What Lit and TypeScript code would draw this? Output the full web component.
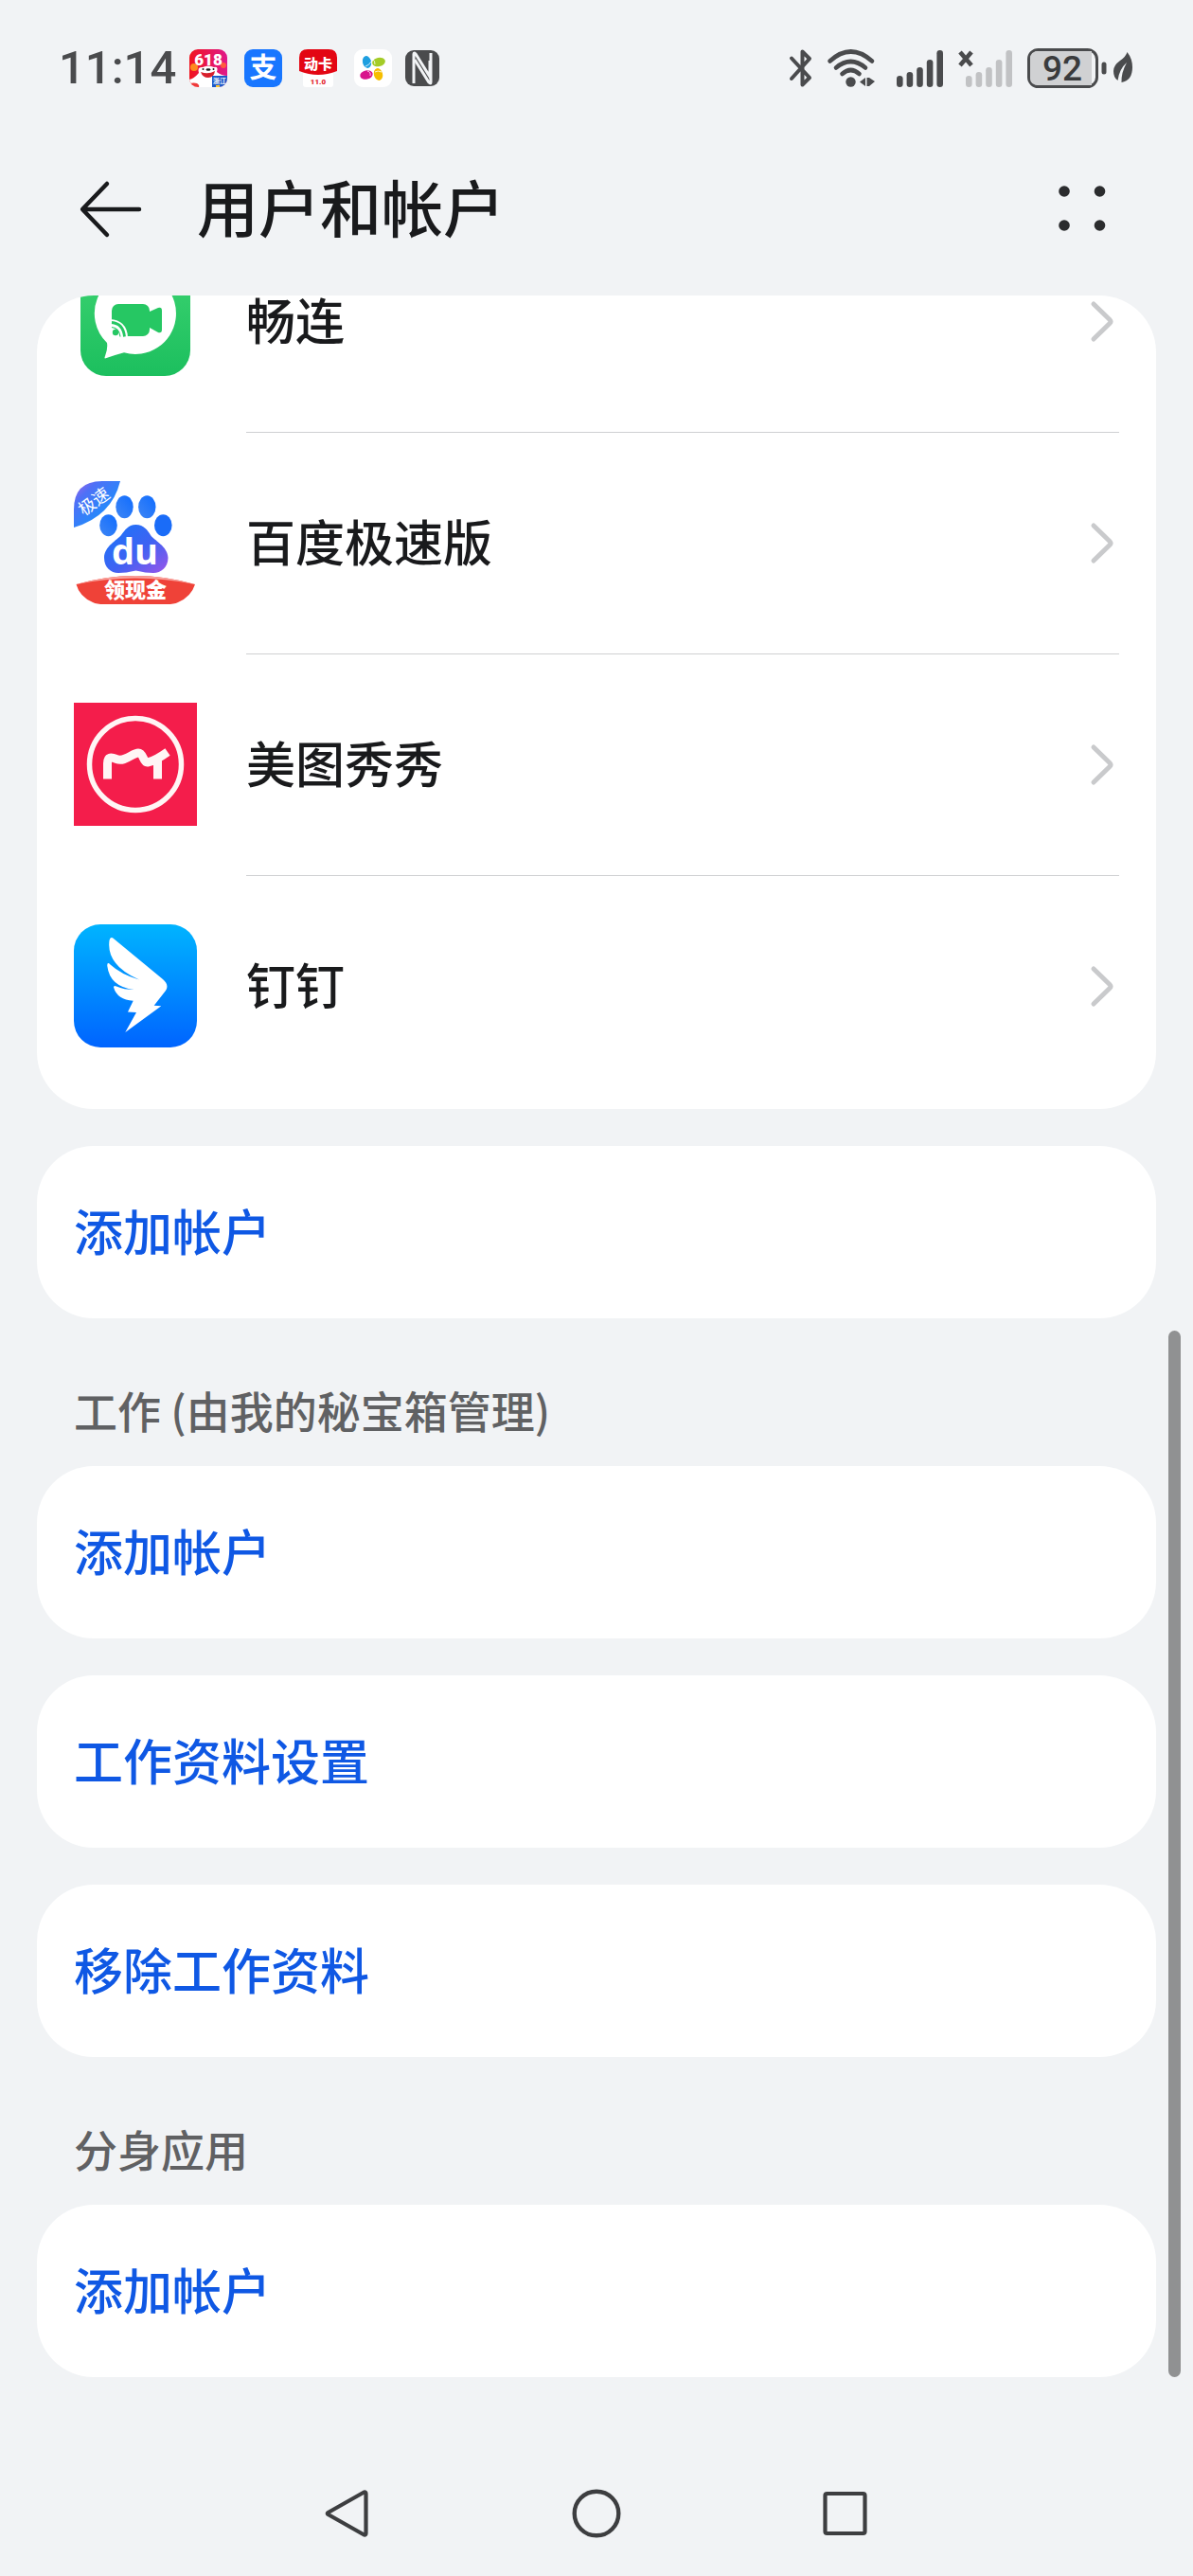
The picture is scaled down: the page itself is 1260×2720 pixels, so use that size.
import { LitElement, html, css, svg, nothing } from "lit";
import { customElement, property } from "lit/decorators.js";

const cjk = css`"Noto Sans CJK SC", "Noto Sans", sans-serif`;

const changlianIcon = html`<svg class="art inset" viewBox="0 0 116 116" aria-hidden="true">
  <defs>
    <linearGradient id="cl" x1="0" y1="0" x2="0" y2="1">
      <stop offset="0" stop-color="#3bd270" />
      <stop offset="1" stop-color="#1cbf5e" />
    </linearGradient>
  </defs>
  <rect width="116" height="116" rx="27" fill="url(#cl)" />
  <path d="M58 7a43 43 0 1 1-12 84.300Q36 94 26 97.500Q25 97 26 95Q29 87 28 81A43 43 0 0 1 58 7z" fill="#fff" />
  <rect x="33" y="40" width="40" height="34" rx="7" fill="#26c763" />
  <path d="M73 48l9-4q4-1 4 3v20q0 4-4 3l-9-5z" fill="#26c763" />
  <path d="M31 56q18 1 19 19H31z" fill="#fff" />
  <path d="M33 59.500q12 1 13.500 15" fill="none" stroke="#26c763" stroke-width="2.800" />
  <circle cx="37" cy="70" r="3.200" fill="#26c763" />
  <path d="M33 64.500q8 1 9 10" fill="none" stroke="#26c763" stroke-width="1.200" />
</svg>`;

const baiduIcon = html`<svg class="art" viewBox="0 0 130 130" aria-hidden="true">
  <defs>
    <linearGradient id="bb" x1="0" y1="0" x2="1" y2="1">
      <stop offset="0" stop-color="#a765ea" />
      <stop offset="0.25" stop-color="#4f70f6" />
      <stop offset="0.6" stop-color="#2a86fa" />
      <stop offset="1" stop-color="#2a7cfa" />
    </linearGradient>
    <linearGradient id="bp" x1="0" y1="0" x2="1" y2="1">
      <stop offset="0" stop-color="#1677fa" />
      <stop offset="0.55" stop-color="#3f62f2" />
      <stop offset="1" stop-color="#9a55ea" />
    </linearGradient>
    <linearGradient id="bt" x1="0" y1="1" x2="1" y2="0">
      <stop offset="0" stop-color="#3f86f4" />
      <stop offset="1" stop-color="#0f6cff" />
    </linearGradient>
  </defs>
  <path d="M49 0H30Q0 0 0 30V49Q40 37 49 0z" fill="url(#bb)" />
  <text class="cjk" x="21" y="28" font-size="18" fill="#fff" text-anchor="middle" transform="rotate(-36 21 21)">极速</text>
  <ellipse cx="53.500" cy="27.300" rx="9.200" ry="12" fill="url(#bt)" />
  <ellipse cx="77.300" cy="27.300" rx="9.200" ry="12" fill="url(#bt)" />
  <ellipse cx="36.500" cy="46.700" rx="9.300" ry="11.500" fill="url(#bt)" />
  <ellipse cx="94.300" cy="46.700" rx="9.300" ry="11.500" fill="#1a6cf8" />
  <path d="M65.500 46C74 46 78 52 81 57S99.500 69 99.500 81C99.500 91 92 97 84 97Q76 97 65.500 94.500Q55 97 47 97C39 97 32 91 32 81C32 69 46 62 50 57S57 46 65.500 46z" fill="url(#bp)" />
  <text class="latin" x="64.500" y="88" font-size="38" font-weight="700" fill="#fff" text-anchor="middle">du</text>
  <path d="M2.500 109Q65 91 128 109Q124 122 110 128Q106 130 98 130H32Q24 130 20 128Q6 122 2.500 109z" fill="#ef4238" />
  <path d="M2.500 109Q65 91 128 109Q65 96 2.500 109z" fill="#f9a09a" />
  <text class="cjk" x="65" y="123" font-size="22" font-weight="900" fill="#fff" text-anchor="middle">领现金</text>
</svg>`;

const meituIcon = html`<svg class="art" viewBox="0 0 130 130" aria-hidden="true">
  <rect width="130" height="130" fill="#f41d4b" />
  <circle cx="65" cy="65" r="48.500" fill="none" stroke="#fff5f5" stroke-width="5.500" />
  <path d="M35.500 80.500V64C35.500 57 39 57 45 59.500C54 63 62 53 68 53C74 53 73 64 78 63C83 62 92 57 99 52" fill="none" stroke="#fff5f5" stroke-width="9" />
  <path d="M88.500 58V80.500" fill="none" stroke="#fff5f5" stroke-width="9" />
</svg>`;

const dingIcon = html`<svg class="art" viewBox="0 0 130 130" aria-hidden="true">
  <defs>
    <linearGradient id="dd" x1="0" y1="0" x2="0" y2="1">
      <stop offset="0" stop-color="#00b4ff" />
      <stop offset="1" stop-color="#0064ff" />
    </linearGradient>
  </defs>
  <rect width="130" height="130" rx="28" fill="url(#dd)" />
  <path d="M37.500 17Q38.500 12 42.500 15.500L94 58Q101 64 97 70L84.700 85.700L92.300 86.300L54.300 114L66 93L57 92.600L62.700 80.700Q46 80 42 66.500Q42 64 45 65.500Q53 69 63.700 69Q38 66 35.300 44Q35 39 38.500 42.500Q50 53 69 58.500Q34 43 37.500 17z" fill="#fff" />
</svg>`;

interface Account {
  name: string;
  icon: unknown;
}

const accounts: Account[] = [
  { name: "畅连", icon: changlianIcon },
  { name: "百度极速版", icon: baiduIcon },
  { name: "美图秀秀", icon: meituIcon },
  { name: "钉钉", icon: dingIcon },
];

const sections: { heading?: string; actions: string[] }[] = [
  { actions: ["添加帐户"] },
  { heading: "工作 (由我的秘宝箱管理)", actions: ["添加帐户", "工作资料设置", "移除工作资料"] },
  { heading: "分身应用", actions: ["添加帐户"] },
];

const bars = (x: number, color: string) =>
  [12, 16, 21, 29, 39].map(
    (h, i) => svg`<rect x=${x + i * 10.6} y=${40 - h} width="6.600" height=${h} rx="3.300" fill=${color} />`
  );

@customElement("status-bar")
class StatusBar extends LitElement {
  static styles = css`
    :host {
      display: flex;
      justify-content: space-between;
      align-items: center;
      box-sizing: border-box;
      height: 130px;
      padding: 14px 64px 0 62px;
      color: #4a4b4d;
      font-family: Roboto, sans-serif;
    }
    svg {
      display: block;
      height: 40px;
      overflow: visible;
    }
    .left {
      display: flex;
      align-items: center;
      gap: 14px;
    }
    .apps,
    .right {
      display: flex;
      align-items: center;
    }
    .apps {
      gap: 18px;
    }
    .right {
      gap: 16px;
    }
    .time {
      font-size: 49px;
      font-weight: 500;
      line-height: 60px;
    }
    .cjk {
      font-family: ${cjk};
    }
  `;

  render() {
    return html`
      <div class="left">
        <span class="time">11:14</span>
        <div class="apps">
          <svg width="40" viewBox="0 0 40 40" aria-hidden="true">
            <defs>
              <linearGradient id="jd" x1="0" y1="0" x2="1" y2="0">
                <stop offset="0" stop-color="#f0141e" />
                <stop offset="1" stop-color="#e0188a" />
              </linearGradient>
              <clipPath id="jc"><rect width="40" height="40" rx="9" /></clipPath>
            </defs>
            <g clip-path="url(#jc)">
              <rect width="40" height="40" fill="url(#jd)" />
              <circle cx="5" cy="19" r="4" fill="#ff8a1e" />
              <circle cx="36" cy="17" r="3" fill="#ff5a3c" />
              <path d="M0 32Q5 31 10 25Q8 18 14 19Q20 16 26 19Q31 18 29 24Q34 28 40 28V40H0z" fill="#fff" />
              <path d="M12 24Q20 27 27 23Q26 30 20 30Q14 30 12 24z" fill="#d8202c" />
              <ellipse cx="20" cy="21.500" rx="2.500" ry="1.300" fill="#1c1c1e" />
              <circle cx="14.500" cy="21" r="1" fill="#1c1c1e" />
              <circle cx="25.500" cy="21" r="1" fill="#1c1c1e" />
              <path d="M0 36Q5 35 8 36Q11 38 10 40H0z" fill="#ef3a3a" />
              <text x="20" y="17" font-size="17" font-weight="900" fill="#fff" text-anchor="middle">618</text>
              <rect x="24" y="28" width="16" height="12" fill="#1c58c8" />
              <text class="cjk" x="32" y="36" font-size="7" font-weight="700" fill="#fff" text-anchor="middle">浙江</text>
              <rect x="28" y="38" width="4" height="2" fill="#ffc52e" />
            </g>
          </svg>
          <svg width="40" viewBox="0 0 40 40" aria-hidden="true">
            <rect width="40" height="40" rx="9" fill="#1876ff" />
            <text class="cjk" x="20" y="30" font-size="29" font-weight="700" fill="#fff" text-anchor="middle">支</text>
          </svg>
          <svg width="40" viewBox="0 0 40 40" aria-hidden="true">
            <rect x="4" y="20" width="32" height="20" rx="3" fill="#fff" />
            <path d="M0 9Q0 0 9 0H31Q40 0 40 9V23Q20 31 0 23z" fill="#e30613" />
            <text class="cjk" x="20" y="21" font-size="15" font-weight="900" fill="#fff" text-anchor="middle">动卡</text>
            <text x="20" y="37" font-size="8" font-weight="900" fill="#e3262e" text-anchor="middle">11.0</text>
          </svg>
          <svg width="40" viewBox="0 0 40 40" aria-hidden="true">
            <rect width="40" height="40" rx="9" fill="#fff" />
            <ellipse cx="13.500" cy="13.500" rx="4.500" ry="6.500" transform="rotate(-15 13.500 13.500)" fill="#1e9fe0" />
            <ellipse cx="26" cy="13.500" rx="7" ry="4.700" transform="rotate(-12 26 13.500)" fill="#a4cc28" />
            <ellipse cx="13" cy="27" rx="6.800" ry="4.700" transform="rotate(-12 13 27)" fill="#d8148c" />
            <ellipse cx="25.500" cy="26.500" rx="4.600" ry="6.500" transform="rotate(-15 25.500 26.500)" fill="#f6be00" />
            <path d="M12 18Q16 17 18 13M22 16Q22 12 20 11M14 23Q18 24 17 28M22 24Q25 22 29 24" fill="none" stroke="#fff" stroke-width="0.800" />
          </svg>
        </div>
        <svg width="36" viewBox="0 0 36 40" aria-label="NFC">
          <rect y="1" width="36" height="38" rx="9" fill="#4a4b4d" />
          <path d="M9 36V5Q9 3 11 5L26 29V12" fill="none" stroke="#f1f3f5" stroke-width="3" />
          <path d="M27 4V35Q27 37 25 35L10 11" fill="none" stroke="#f1f3f5" stroke-width="3" />
        </svg>
      </div>
      <div class="right">
        <svg width="24" viewBox="0 0 24 40" aria-label="蓝牙">
          <path d="M2 9.500L21 30L13.500 37.500V2.500L21 10L2 31" fill="none" stroke="#4a4b4d" stroke-width="4" stroke-linejoin="round" stroke-linecap="round" />
        </svg>
        <svg width="57" viewBox="0 0 57 40" aria-label="无线网络">
          <g fill="none" stroke="#4a4b4d" stroke-width="4.600" stroke-linecap="round">
            <path d="M2.500 12.500Q24.500-7.500 47 12.500" />
            <path d="M9 19.500Q24.500 6.500 40 19.500" />
            <path d="M15.500 26Q24.500 18 33.500 26" />
          </g>
          <circle cx="24.500" cy="34.500" r="5.200" fill="#4a4b4d" />
          <path d="M34 34.500L40 30V39zM41.500 30h2.500v9h-2.500zM44 39V30L50 34z" fill="#4a4b4d" />
        </svg>
        <svg width="49" viewBox="0 0 49 40" aria-label="信号">${bars(0, "#4a4b4d")}</svg>
        <svg width="57" viewBox="0 0 57 40" aria-label="无信号">
          <path d="M2 3L14 17M14 3L2 17" stroke="#4a4b4d" stroke-width="4.600" />
          ${bars(8, "#c1c2c4")}
        </svg>
        <svg width="111" viewBox="0 0 111 40" aria-label="电量">
          <rect x="1.500" y="0.500" width="72" height="39" rx="10" fill="#f1f3f5" stroke="#4a4b4d" stroke-width="3" />
          <path d="M12 2H68V38H12Q3 38 3 30V10Q3 2 12 2z" fill="#d0d1d3" />
          <text x="37" y="33" font-size="37" font-weight="500" fill="#3a3b3d" text-anchor="middle">92</text>
          <rect x="78.500" y="13.500" width="5" height="13" rx="2.500" fill="#4a4b4d" />
          <path d="M105.500 3Q111 10 111 19Q111 33 99.500 35Q99 25 105 14Q97 21 95.500 33Q91 30 91 23Q91 17 98 12Q104 8 105.500 3z" fill="#4a4b4d" />
        </svg>
      </div>
    `;
  }
}

@customElement("account-list")
class AccountList extends LitElement {
  @property({ attribute: false }) items: Account[] = [];

  static styles = css`
    :host {
      display: block;
      overflow: hidden;
      border-radius: 60px;
      background: #fff;
    }
    /* The list is scrolled partway, so the first row shows only its lower part. */
    .list {
      list-style: none;
      margin: -90px 0 0;
      padding: 0 0 13px;
    }
    .row {
      display: flex;
      align-items: center;
      box-sizing: border-box;
      width: 100%;
      height: 234px;
      padding: 0 39px;
      gap: 52px;
      color: #191a1c;
      text-decoration: none;
    }
    .icon {
      display: flex;
      flex: none;
      justify-content: center;
      width: 130px;
    }
    .art {
      display: block;
      width: 130px;
      height: 130px;
      overflow: visible;
    }
    .inset {
      width: 116px;
      height: 116px;
    }
    .body {
      display: flex;
      flex: 1;
      align-items: center;
      justify-content: space-between;
      box-sizing: border-box;
      height: 100%;
      border-top: 1px solid #cfd0d2;
    }
    .name {
      padding-bottom: 6px;
      font-family: ${cjk};
      font-size: 52px;
      font-weight: 500;
      line-height: 52px;
    }
    .chevron {
      display: block;
      width: 36px;
      height: 48px;
    }
    .cjk {
      font-family: ${cjk};
    }
    .latin {
      font-family: "Open Sans", sans-serif;
    }
  `;

  render() {
    return html`<ul class="list">
      ${this.items.map(
        (a) => html`<li>
          <a class="row" href="#">
            <span class="icon">${a.icon}</span>
            <span class="body">
              <span class="name">${a.name}</span>
              <svg class="chevron" viewBox="0 0 36 48" aria-hidden="true">
                <path d="M9 5L26 21.500Q28 23.500 26 25.500L9 42" fill="none" stroke="#c9cacc" stroke-width="5" stroke-linecap="round" stroke-linejoin="round" />
              </svg>
            </span>
          </a>
        </li>`
      )}
    </ul>`;
  }
}

@customElement("app-root")
class AppRoot extends LitElement {
  static styles = css`
    :host {
      display: flex;
      flex-direction: column;
      box-sizing: border-box;
      min-height: 100vh;
      background: #f1f3f5;
      font-family: ${cjk};
    }
    button {
      border: 0;
      padding: 0;
      background: none;
      font-family: inherit;
    }
    svg {
      display: block;
    }
    .header {
      display: flex;
      align-items: center;
      height: 182px;
      padding: 0 78px;
      gap: 52px;
    }
    .title {
      flex: 1;
      margin: 0;
      padding-bottom: 8px;
      color: #191a1c;
      font-size: 65px;
      font-weight: 500;
      line-height: 90px;
    }
    .main {
      position: relative;
      display: flex;
      flex: 1;
      flex-direction: column;
      padding: 0 39px;
    }
    .section {
      display: flex;
      flex-direction: column;
      gap: 39px;
    }
    .section.plain {
      padding-top: 39px;
    }
    .heading {
      margin: 0 0 -39px;
      padding: 64px 39px 28px;
      color: #606163;
      font-size: 46px;
      font-weight: 500;
      line-height: 64px;
    }
    .action {
      height: 182px;
      padding: 0 39px 4px;
      border-radius: 60px;
      background: #fff;
      color: #0f58e4;
      font-size: 52px;
      font-weight: 500;
      line-height: 72px;
      text-align: left;
    }
    .thumb {
      position: absolute;
      top: 1093px;
      right: 13px;
      bottom: 78px;
      width: 13px;
      border-radius: 7px;
      background: #909192;
    }
    .nav {
      display: flex;
      align-items: center;
      justify-content: center;
      height: 132px;
      gap: 199px;
    }
  `;

  render() {
    return html`
      <status-bar></status-bar>
      <header class="header">
        <button aria-label="返回">
          <svg width="78" height="78" viewBox="0 0 78 78" aria-hidden="true">
            <path d="M69 39H9.500M35 12L9.500 38.500Q9 39 9.500 39.500L35 66" fill="none" stroke="#191a1c" stroke-width="4.500" stroke-linecap="round" stroke-linejoin="round" />
          </svg>
        </button>
        <h1 class="title">用户和帐户</h1>
        <button aria-label="更多">
          <svg width="78" height="78" viewBox="0 0 78 78" aria-hidden="true">
            <g fill="#2b2c2e">
              <circle cx="20" cy="20" r="5.800" />
              <circle cx="57.500" cy="20" r="5.800" />
              <circle cx="20" cy="56" r="5.800" />
              <circle cx="57.500" cy="56" r="5.800" />
            </g>
          </svg>
        </button>
      </header>
      <main class="main">
        <account-list .items=${accounts}></account-list>
        ${sections.map(
          (s) => html`<section class="section ${s.heading ? "" : "plain"}">
            ${s.heading ? html`<h2 class="heading">${s.heading}</h2>` : nothing}
            ${s.actions.map((a) => html`<button class="action">${a}</button>`)}
          </section>`
        )}
        <div class="thumb"></div>
      </main>
      <nav class="nav">
        <button aria-label="后退">
          <svg width="64" height="64" viewBox="0 0 64 64" aria-hidden="true">
            <path d="M11.500 31L49.500 9.500Q51.500 9 51.500 11V53Q51.500 55 49.500 54.500L11.500 33Q10 32 11.500 31z" fill="none" stroke="#3d3e40" stroke-width="4.200" stroke-linejoin="round" />
          </svg>
        </button>
        <button aria-label="主页">
          <svg width="64" height="64" viewBox="0 0 64 64" aria-hidden="true">
            <circle cx="32" cy="32" r="23.300" fill="none" stroke="#3d3e40" stroke-width="4.400" />
          </svg>
        </button>
        <button aria-label="最近任务">
          <svg width="64" height="64" viewBox="0 0 64 64" aria-hidden="true">
            <rect x="10.500" y="11" width="42" height="42" rx="2" fill="none" stroke="#3d3e40" stroke-width="4.200" />
          </svg>
        </button>
      </nav>
    `;
  }
}
